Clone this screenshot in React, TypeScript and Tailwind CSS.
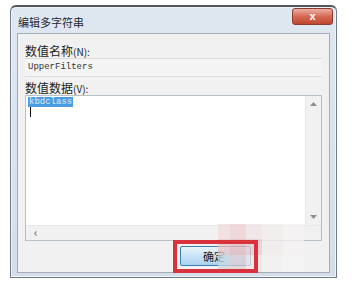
import { ChevronLeft } from "lucide-react";

const cjk = { fontFamily: '"Noto Sans CJK SC", "Noto Sans", sans-serif' };
const mono = { fontFamily: '"Liberation Mono", "DejaVu Sans Mono", monospace' };

function Arrow({ dir }: { dir: "up" | "down" }) {
  return (
    <svg width="7" height="4" viewBox="0 0 7 4" className="text-[#8a8f96]">
      {dir === "up" ? (
        <path d="M0 4 L3.5 0 L7 4 Z" fill="currentColor" />
      ) : (
        <path d="M0 0 L3.5 4 L7 0 Z" fill="currentColor" />
      )}
    </svg>
  );
}

export default function App() {
  return (
    <div className="relative w-[354px] h-[283px] bg-white overflow-hidden" style={cjk}>
      {/* window */}
      <div className="ml-[10px] mt-[5px] w-[327px] h-[273px] flex flex-col rounded-t-[6px] border border-[#6f7a86] border-t-2 border-t-[#4f5660] bg-gradient-to-b from-[#dfe8f1] to-[#d3dee9] shadow-[inset_0_0_0_1px_#eef3f8]">
        {/* title bar */}
        <div className="h-[26px] flex items-start justify-between">
          <span className="mt-[9px] ml-[7px] text-[11px] leading-[13px] text-[#1f2833]">编辑多字符串</span>
          <div className="mt-[1px] mr-[3px] w-[41px] h-[17px] rounded-[3px] border border-[#8e3b30] bg-gradient-to-b from-[#eab0a2] via-[#d46a55] to-[#c0472f] flex items-center justify-center">
            <span className="text-white text-[11px] font-bold leading-none" style={{ fontFamily: '"Liberation Sans", sans-serif' }}>x</span>
          </div>
        </div>

        {/* content panel */}
        <div className="mx-[6px] mb-[4px] flex-1 flex flex-col border border-[#a3adb8] bg-[#f1f1f1] px-[7px]">
          <div className="mt-[10px] h-[14px] text-[12px] leading-[14px] text-[#222]">
            数值名称<span className="text-[10px]">(N):</span>
          </div>
          <div className="h-[19px] border-y border-[#dcdcdc] bg-[#f4f4f4] flex items-center pl-[3px]">
            <span className="text-[9px] text-[#333]" style={mono}>UpperFilters</span>
          </div>
          <div className="mt-[4px] h-[14px] text-[12px] leading-[14px] text-[#222]">
            数值数据<span className="text-[10px]">(V):</span>
          </div>
          {/* textarea */}
          <div className="h-[146px] border border-[#b8c0c8] bg-white flex flex-col">
            <div className="flex-1 flex">
              <div className="flex-1 pl-[2px] pt-[1px]">
                <div className="h-[10px] flex">
                  <span className="bg-[#4d9be0] text-[#dceefc] text-[9px] leading-[10px] px-[1px]" style={mono}>kbdclass</span>
                </div>
                <div className="ml-[2px] w-[1px] h-[10px] bg-black" />
              </div>
              <div className="w-[16px] border-l border-[#e6e6e6] bg-[#f1f1f1] flex flex-col items-center justify-between py-[6px]">
                <Arrow dir="up" />
                <Arrow dir="down" />
              </div>
            </div>
            <div className="h-[15px] flex border-t border-[#e6e6e6]">
              <div className="flex-1 bg-[#f1f1f1] flex items-center pl-[6px]">
                <ChevronLeft size={7} strokeWidth={4} className="text-[#8a8f96]" />
              </div>
              <div className="w-[16px] bg-[#f0f0f0]" />
            </div>
          </div>
          {/* buttons */}
          <div className="mt-[5px] flex">
            <div className="ml-[155px] w-[71px] h-[20px] rounded-[2px] border border-[#3c7fb1] bg-gradient-to-b from-[#e9f4fb] via-[#c8e3f5] to-[#a9d3ef] flex items-center pl-[22px]">
              <span className="text-[11px] text-[#1a1a1a] leading-none">确定</span>
            </div>
          </div>
        </div>
      </div>

      {/* mosaic watermark */}
      <div className="absolute left-[218px] top-[224px] w-[86px] h-[48px] flex flex-wrap opacity-75">
        <div className="w-[12px] h-[15px] bg-[#f2dcdc]" />
        <div className="w-[16px] h-[15px] bg-[#eed0d2]" />
        <div className="w-[16px] h-[15px] bg-[#f0e4e6]" />
        <div className="w-[21px] h-[15px] bg-[#f4eded]" />
        <div className="w-[21px] h-[15px] bg-[#f5f3f3]" />
        <div className="w-[12px] h-[16px] bg-[#e7c4c8]" />
        <div className="w-[16px] h-[16px] bg-[#e3b7bc]" />
        <div className="w-[16px] h-[16px] bg-[#e8c8cc]" />
        <div className="w-[21px] h-[16px] bg-[#f1ecec]" />
        <div className="w-[21px] h-[16px] bg-[#f4f2f2]" />
        <div className="w-[12px] h-[17px] bg-[#ccd9e2]" />
        <div className="w-[16px] h-[17px] bg-[#e1cdd3]" />
        <div className="w-[16px] h-[17px] bg-[#f0e7e8]" />
        <div className="w-[21px] h-[17px] bg-[#f3f1f1]" />
        <div className="w-[21px] h-[17px] bg-[#f6f5f5]" />
      </div>

      {/* red annotation box */}
      <div className="absolute left-[173px] top-[240px] w-[85px] h-[33px] border-[4px] border-[#d8323c]" />
    </div>
  );
}
